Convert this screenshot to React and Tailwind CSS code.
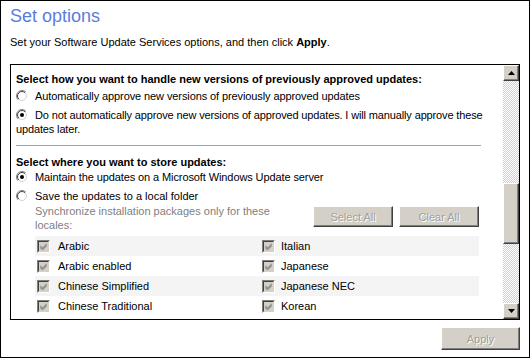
const locales = [
  ['Arabic', 'Italian'],
  ['Arabic enabled', 'Japanese'],
  ['Chinese Simplified', 'Japanese NEC'],
  ['Chinese Traditional', 'Korean'],
]

function Radio({ checked }) {
  return (
    <svg width="12" height="12" viewBox="0 0 12 12" className="inline-block align-[-2px] mr-[7px]">
      <defs>
        <linearGradient id="radio-outer" x1="0" y1="0" x2="1" y2="1">
          <stop offset="0.5" stopColor="#808080" />
          <stop offset="0.5" stopColor="#ffffff" />
        </linearGradient>
        <linearGradient id="radio-inner" x1="0" y1="0" x2="1" y2="1">
          <stop offset="0.5" stopColor="#404040" />
          <stop offset="0.5" stopColor="#d4d0c8" />
        </linearGradient>
      </defs>
      <circle cx="6" cy="6" r="5.5" fill="none" stroke="url(#radio-outer)" />
      <circle cx="6" cy="6" r="4.5" fill="#fff" stroke="url(#radio-inner)" />
      {checked && <circle cx="6" cy="6" r="2" fill="#000" />}
    </svg>
  )
}

function Checkbox() {
  return (
    <span className="block w-[13px] h-[13px] shrink-0 border border-t-[#808080] border-l-[#808080] border-r-white border-b-white">
      <span className="flex items-center justify-center w-full h-full border border-t-[#404040] border-l-[#404040] border-r-[#d4d0c8] border-b-[#d4d0c8] bg-[#d4d0c8]">
        <svg width="7" height="7" viewBox="0 0 7 7">
          <path d="M0 2.5 L2.5 5 L7 0.5 M0 3.5 L2.5 6 L7 1.5 M0 4.5 L2.5 7 L7 2.5" stroke="#808080" strokeWidth="1" fill="none" />
        </svg>
      </span>
    </span>
  )
}

function DisabledButton({ label, className }) {
  return (
    <div
      className={`flex items-center justify-center bg-[#d4d0c8] border border-t-white border-l-white border-r-[#404040] border-b-[#404040] shadow-[inset_-1px_-1px_#808080] text-[#a19f99] [text-shadow:1px_1px_#ffffff] ${className}`}
    >
      {label}
    </div>
  )
}

function Arrow({ up }) {
  return (
    <div className="h-[16px] flex items-center justify-center bg-[#d4d0c8] border border-t-white border-l-white border-r-[#404040] border-b-[#404040] shadow-[inset_-1px_-1px_#808080]">
      <svg width="7" height="4" viewBox="0 0 7 4">
        <polygon points={up ? '3.5,0 7,4 0,4' : '0,0 7,0 3.5,4'} fill="#000" />
      </svg>
    </div>
  )
}

export default function App() {
  return (
    <div className="w-[530px] h-[358px] border border-black bg-white text-[11px] leading-[14px] text-black font-['Liberation_Sans',Arial,sans-serif]">
      <div className="pt-[4px] pl-[9px] text-[18px] leading-[22px] text-[#5a7ddc]">Set options</div>
      <div className="mt-[8px] pl-[9px]">
        Set your Software Update Services options, and then click <b>Apply</b>.
      </div>

      <div className="mt-[15px] ml-[9px] w-[510px] h-[256px] border border-black flex">
        <div className="flex-1 overflow-hidden pl-[5px] pt-[7px]">
          <div className="font-bold whitespace-nowrap">
            Select how you want to handle new versions of previously approved updates:
          </div>
          <div className="mt-[3px] whitespace-nowrap tracking-[-0.1px]">
            <Radio />
            Automatically approve new versions of previously approved updates
          </div>
          <div className="mt-[5px] whitespace-nowrap tracking-[-0.14px]">
            <Radio checked />
            Do not automatically approve new versions of approved updates. I will manually approve these
            <br />
            updates later.
          </div>
          <div className="mt-[9px] h-px w-[465px] bg-[#8aa5e0]" />
          <div className="mt-[9px] font-bold">Select where you want to store updates:</div>
          <div className="mt-[1px] whitespace-nowrap tracking-[-0.1px]">
            <Radio checked />
            Maintain the updates on a Microsoft Windows Update server
          </div>
          <div className="mt-[5px] whitespace-nowrap">
            <Radio />
            Save the updates to a local folder
          </div>
          <div className="mt-[1px] ml-[19px] flex">
            <div className="w-[278px] text-[#808080] whitespace-nowrap">
              Synchronize installation packages only for these
              <br />
              locales:
            </div>
            <div className="mt-[2px] flex gap-[6px]">
              <DisabledButton label="Select All" className="w-[80px] h-[21px]" />
              <DisabledButton label="Clear All" className="w-[80px] h-[21px]" />
            </div>
          </div>
          <div className="mt-[4px] ml-[19px] w-[444px]">
            {locales.map(([left, right], i) => (
              <div
                key={left}
                className={`h-[20px] grid grid-cols-[225px_219px] ${i % 2 === 0 ? 'bg-[#f4f4f4]' : 'bg-white'}`}
              >
                <div className="flex items-center gap-[8px] pl-[2px]">
                  <Checkbox />
                  <span>{left}</span>
                </div>
                <div className="flex items-center gap-[6px] pl-[2px]">
                  <Checkbox />
                  <span>{right}</span>
                </div>
              </div>
            ))}
          </div>
        </div>

        <div className="w-[16px] flex flex-col">
          <Arrow up />
          <div className="flex-1 bg-[conic-gradient(#d4d0c8_25%,#ffffff_0_50%,#d4d0c8_0_75%,#ffffff_0)] bg-[length:2px_2px]">
            <div className="h-[102px]" />
            <div className="h-[61px] bg-[#d4d0c8] border border-t-white border-l-white border-r-[#404040] border-b-[#404040] shadow-[inset_-1px_-1px_#808080]" />
          </div>
          <Arrow />
        </div>
      </div>

      <div className="mt-[7px] ml-[440px] w-[79px]">
        <DisabledButton label="Apply" className="w-[79px] h-[23px]" />
      </div>
    </div>
  )
}
